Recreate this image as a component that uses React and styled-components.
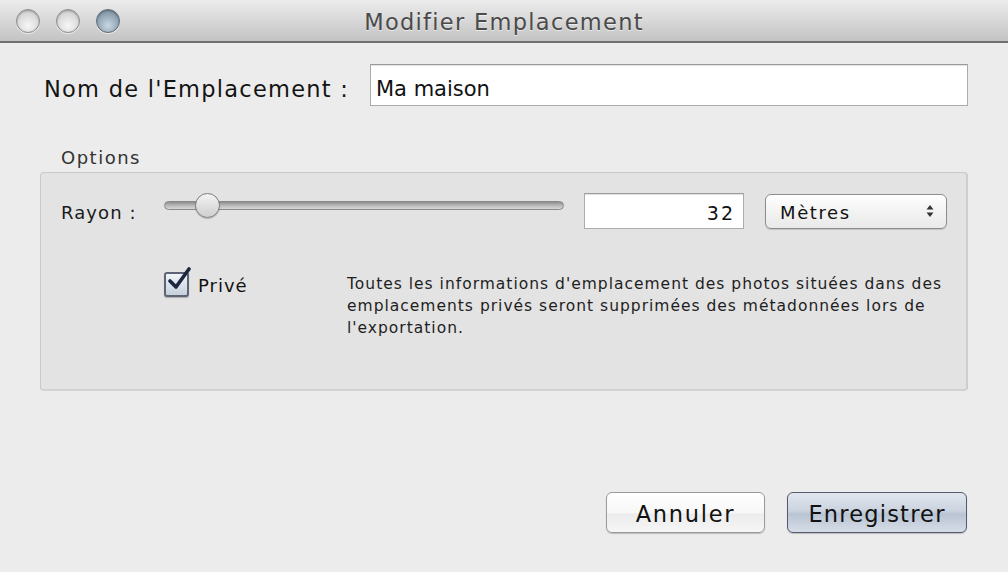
import React from 'react';
import styled, { createGlobalStyle } from 'styled-components';

const Global = createGlobalStyle`
  html, body { margin: 0; padding: 0; background: #ececec; }
  body { font-family: "DejaVu Sans", "Noto Sans", sans-serif; color: #1e1e1e; }
  * { box-sizing: border-box; }
`;

const Window = styled.div`
  width: 1008px;
  height: 572px;
  background: #ececec;
  display: flex;
  flex-direction: column;
  overflow: hidden;
`;

const TitleBar = styled.div`
  height: 43px;
  flex: none;
  border-bottom: 2px solid #707070;
  background: linear-gradient(#ececec, #d8d8d8 50%, #c3c3c3);
  display: grid;
  grid-template-columns: 1fr auto 1fr;
  align-items: center;
`;

const Lights = styled.div`
  display: flex;
  gap: 16px;
  padding-left: 16px;
`;

const Light = styled.span`
  width: 24px;
  height: 24px;
  border-radius: 50%;
  border: 1px solid ${p => (p.$active ? '#5d6c78' : '#8e8e8e')};
  background: ${p =>
    p.$active
      ? 'radial-gradient(circle at 50% 70%, #c8d6e0, #8fa3b3 60%, #6f8393)'
      : 'radial-gradient(circle at 50% 70%, #f6f6f6, #d9d9d9 60%, #bdbdbd)'};
  box-shadow: 0 1px 0 rgba(255,255,255,0.6), inset 0 1px 2px rgba(0,0,0,0.25);
`;

const Title = styled.div`
  font-size: 22.5px;
  letter-spacing: 1.3px;
  color: #4a4a4a;
  text-shadow: 0 1px 0 rgba(255,255,255,0.6);
  padding-top: 2px;
`;

const Body = styled.div`
  flex: 1;
  display: flex;
  flex-direction: column;
  padding: 21px 40px 39px 40px;
`;

const NameRow = styled.div`
  display: flex;
  align-items: center;
  padding-left: 4px;
`;

const NameLabel = styled.label`
  width: 326px;
  font-size: 22.5px;
  letter-spacing: 1.25px;
  color: #141414;
  padding-top: 8px;
`;

const TextField = styled.div`
  width: ${p => p.$w}px;
  height: ${p => p.$h}px;
  background: #fff;
  border: 1px solid #ababab;
  border-top-color: #9a9a9a;
  box-shadow: inset 0 2px 1px -1px rgba(0,0,0,0.12);
  display: flex;
  align-items: center;
  justify-content: ${p => (p.$right ? 'flex-end' : 'flex-start')};
  padding: ${p => p.$pt}px ${p => (p.$right ? 8 : 5)}px 0;
  font-size: ${p => p.$fs}px;
  letter-spacing: ${p => p.$ls}px;
  color: #111;
`;

const OptionsLabel = styled.div`
  margin: 42px 0 0 21px;
  font-size: 18px;
  letter-spacing: 1.5px;
  line-height: 20px;
  color: #333;
`;

const Group = styled.div`
  margin-top: 4px;
  width: 928px;
  height: 219px;
  background: #e3e3e3;
  border: 1px solid #c9c9c9;
  border-bottom: 2px solid #d2d2d2;
  border-right: 2px solid #cdcdcd;
  border-radius: 4px;
  padding: 20px 0 0 20px;
  display: flex;
  flex-direction: column;
`;

const RayonRow = styled.div`
  display: flex;
  align-items: center;
  height: 36px;
`;

const RayonLabel = styled.label`
  width: 103px;
  font-size: 18px;
  letter-spacing: 1.1px;
  color: #1a1a1a;
  padding-top: 3px;
`;

const Slider = styled.div`
  position: relative;
  width: 400px;
  height: 25px;
  margin-top: -12px;
  display: flex;
  align-items: center;
`;

const Track = styled.div`
  width: 100%;
  height: 9px;
  border-radius: 5px;
  border: 1px solid #8a8a8a;
  background: linear-gradient(#8c8c8c, #b5b5b5 45%, #d8d8d8);
`;

const Knob = styled.div`
  position: absolute;
  top: 0;
  width: 25px;
  height: 25px;
  border-radius: 50%;
  border: 1px solid #7e7e7e;
  background: linear-gradient(#f4f4f4, #dcdcdc 60%, #d0d0d0);
  box-shadow: 0 1px 1px rgba(0,0,0,0.2);
`;

const Gap = styled.div`
  width: ${p => p.$w}px;
  flex: none;
`;

const Popup = styled.div`
  width: 182px;
  height: 35px;
  border: 1px solid #8d8d8d;
  border-radius: 6px;
  background: linear-gradient(#ffffff, #f3f3f3 50%, #e9e9e9);
  box-shadow: 0 1px 1px rgba(0,0,0,0.15);
  display: flex;
  align-items: center;
  justify-content: space-between;
  padding: 2px 12px 0 14px;
  font-size: 18px;
  letter-spacing: 1.6px;
  color: #111;
`;

const Arrows = styled.svg`
  margin-top: -2px;
`;

const CheckRow = styled.div`
  display: flex;
  align-items: flex-start;
  margin-top: 43px;
  padding-left: 103px;
`;

const CheckWrap = styled.div`
  display: flex;
  align-items: center;
  width: 183px;
  gap: 9px;
  height: 24px;
`;

const Box = styled.div`
  position: relative;
  width: 25px;
  height: 25px;
  border-radius: 3px;
  border: 2px solid #5d6475;
  background: linear-gradient(#f2f5f8, #c6d0da);
  box-shadow: 0 1px 1px rgba(0,0,0,0.25);
`;

const Tick = styled.svg`
  position: absolute;
  left: 1px;
  top: -7px;
`;

const CheckLabel = styled.span`
  font-size: 18px;
  letter-spacing: 1px;
  color: #111;
  padding-top: 2px;
`;

const Desc = styled.p`
  margin: 1px 0 0 0;
  font-size: 15.5px;
  letter-spacing: 1px;
  line-height: 22px;
  color: #1e1e1e;
  white-space: nowrap;
`;

const ButtonRow = styled.div`
  margin-top: auto;
  display: flex;
  justify-content: flex-end;
  gap: 22px;
  padding-right: 1px;
`;

const Button = styled.button`
  width: ${p => p.$w}px;
  height: 41px;
  border-radius: 6px;
  font-family: "DejaVu Sans", "Noto Sans", sans-serif;
  font-size: 22.5px;
  letter-spacing: ${p => p.$ls}px;
  color: #111;
  border: 1px solid ${p => (p.$primary ? '#555a6e' : '#9a9a9a')};
  background: ${p =>
    p.$primary
      ? 'linear-gradient(#e2e7ef, #cbd3df 45%, #b9c4d3 55%, #d6dde7)'
      : 'linear-gradient(#ffffff, #f7f7f7 50%, #ececec 55%, #f6f6f6)'};
  box-shadow: 0 1px 1px rgba(0,0,0,0.2);
  padding: 2px 0 0;
`;

export default function App() {
  return (
    <>
      <Global />
      <Window>
        <TitleBar>
          <Lights>
            <Light />
            <Light />
            <Light $active />
          </Lights>
          <Title>Modifier Emplacement</Title>
          <div />
        </TitleBar>
        <Body>
          <NameRow>
            <NameLabel>Nom de l'Emplacement :</NameLabel>
            <TextField $w={598} $h={42} $fs={21} $ls={0} $pt={8}>Ma maison</TextField>
          </NameRow>
          <OptionsLabel>Options</OptionsLabel>
          <Group>
            <RayonRow>
              <RayonLabel>Rayon :</RayonLabel>
              <Slider>
                <Track />
                <Knob style={{ left: '31px' }} />
              </Slider>
              <Gap $w={20} />
              <TextField $w={160} $h={36} $fs={19} $ls={2} $pt={3} $right>32</TextField>
              <Gap $w={21} />
              <Popup>
                <span>Mètres</span>
                <Arrows width="8" height="14" viewBox="0 0 8 14">
                  <path d="M4 1 L7.5 5.5 H0.5 Z" fill="#333" />
                  <path d="M4 13 L7.5 8.5 H0.5 Z" fill="#333" />
                </Arrows>
              </Popup>
            </RayonRow>
            <CheckRow>
              <CheckWrap>
                <Box>
                  <Tick width="26" height="26" viewBox="0 0 26 26">
                    <path d="M3 14 L9 20 L22 2" fill="none" stroke="#1d2740" strokeWidth="3.6" strokeLinecap="round" strokeLinejoin="round" />
                  </Tick>
                </Box>
                <CheckLabel>Privé</CheckLabel>
              </CheckWrap>
              <Desc>
                Toutes les informations d'emplacement des photos situées dans des
                <br />
                emplacements privés seront supprimées des métadonnées lors de
                <br />
                l'exportation.
              </Desc>
            </CheckRow>
          </Group>
          <ButtonRow>
            <Button $w={159} $ls={1.7}>Annuler</Button>
            <Button $w={180} $ls={1.2} $primary>Enregistrer</Button>
          </ButtonRow>
        </Body>
      </Window>
    </>
  );
}
